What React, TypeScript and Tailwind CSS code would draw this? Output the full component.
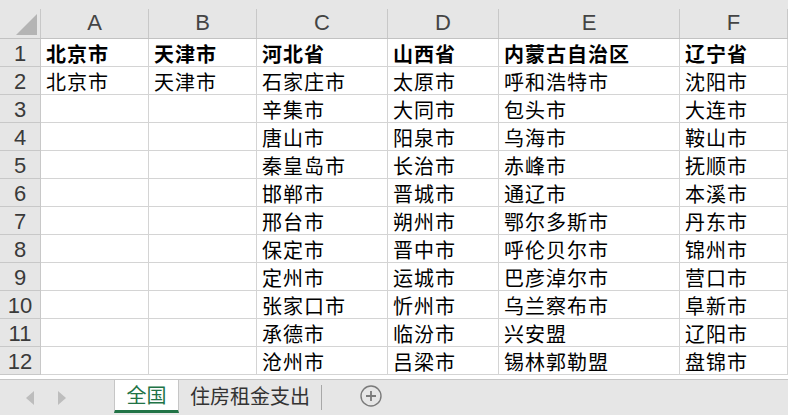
import React from 'react'

const cols = ['A', 'B', 'C', 'D', 'E', 'F']
const widths = ['w-[108px]', 'w-[108px]', 'w-[131px]', 'w-[111px]', 'w-[181px]', 'w-[108px]']

const rows: string[][] = [
  ['北京市', '天津市', '河北省', '山西省', '内蒙古自治区', '辽宁省'],
  ['北京市', '天津市', '石家庄市', '太原市', '呼和浩特市', '沈阳市'],
  ['', '', '辛集市', '大同市', '包头市', '大连市'],
  ['', '', '唐山市', '阳泉市', '乌海市', '鞍山市'],
  ['', '', '秦皇岛市', '长治市', '赤峰市', '抚顺市'],
  ['', '', '邯郸市', '晋城市', '通辽市', '本溪市'],
  ['', '', '邢台市', '朔州市', '鄂尔多斯市', '丹东市'],
  ['', '', '保定市', '晋中市', '呼伦贝尔市', '锦州市'],
  ['', '', '定州市', '运城市', '巴彦淖尔市', '营口市'],
  ['', '', '张家口市', '忻州市', '乌兰察布市', '阜新市'],
  ['', '', '承德市', '临汾市', '兴安盟', '辽阳市'],
  ['', '', '沧州市', '吕梁市', '锡林郭勒盟', '盘锦市'],
]

const App: React.FC = () => {
  return (
    <div className="w-[788px] h-[415px] overflow-hidden bg-white flex flex-col font-['Liberation_Sans','Noto_Sans_CJK_SC',sans-serif]">
      {/* column headers */}
      <div className="flex h-[39px] shrink-0 bg-[#e6e6e6] border-b border-[#c2c2c2]">
        <div className="w-[41px] shrink-0 flex flex-col">
          <div className="h-[9px]" />
          <div className="flex-1 border-r border-[#c8c8c8] flex items-end justify-end pr-[3px] pb-[3px]">
            <svg width="21" height="21" viewBox="0 0 21 21">
              <polygon points="21,0 21,21 0,21" fill="#b4b4b4" />
            </svg>
          </div>
        </div>
        {cols.map((c, i) => (
          <div key={c} className={`${widths[i]} shrink-0 flex flex-col`}>
            <div className="h-[9px]" />
            <div className="flex-1 border-r border-[#c8c8c8] flex items-end justify-center pb-[2px] text-[22px] leading-[26px] text-[#444]">
              {c}
            </div>
          </div>
        ))}
      </div>

      {/* rows */}
      <div className="flex flex-col">
        {rows.map((r, ri) => (
          <div key={ri} className="flex h-[28px] shrink-0">
            <div className="w-[41px] shrink-0 bg-[#e6e6e6] border-r border-b border-[#c8c8c8] flex items-center justify-center text-[22px] leading-none text-[#3a3a3a] pt-[2px]">
              {ri + 1}
            </div>
            {r.map((t, ci) => (
              <div
                key={ci}
                className={`${widths[ci]} shrink-0 border-r border-b border-[#d4d4d4] flex items-center pl-[5px] pt-[3px] text-[20px] leading-none tracking-[1px] text-black whitespace-nowrap font-['Noto_Sans_CJK_SC',sans-serif] ${ri === 0 ? 'font-bold' : 'font-normal'}`}
              >
                {t}
              </div>
            ))}
          </div>
        ))}
      </div>
      <div className="h-[4px] shrink-0" />

      {/* sheet tabs */}
      <div className="flex-1 bg-[#e6e6e6] border-t border-[#c6c6c6] flex items-stretch">
        <div className="w-[114px] shrink-0 flex items-center pl-[26px] gap-[24px]">
          <svg width="8" height="14" viewBox="0 0 8 14">
            <polygon points="8,0 8,14 0,7" fill="#bdbdbd" />
          </svg>
          <svg width="8" height="14" viewBox="0 0 8 14">
            <polygon points="0,0 0,14 8,7" fill="#bdbdbd" />
          </svg>
        </div>
        <div className="w-[65px] shrink-0 h-[33px] bg-white border-l border-r border-[#c6c6c6] border-b-[3px] border-b-[#217346] flex items-center justify-center text-[20px] text-[#217346] font-['Noto_Sans_CJK_SC',sans-serif]">
          全国
        </div>
        <div className="w-[142px] shrink-0 flex items-center justify-center text-[20px] text-[#333] font-['Noto_Sans_CJK_SC',sans-serif]">
          <span className="pb-[4px]">住房租金支出</span>
        </div>
        <div className="w-px my-[5px] bg-[#a8a8a8]" />
        <div className="flex items-center pl-[38px] pb-[3px]">
          <svg width="22" height="22" viewBox="0 0 22 22">
            <circle cx="11" cy="11" r="10" fill="none" stroke="#7a7a7a" strokeWidth="1.4" />
            <path d="M11 6v10M6 11h10" stroke="#7a7a7a" strokeWidth="1.8" />
          </svg>
        </div>
      </div>
    </div>
  )
}

export default App
